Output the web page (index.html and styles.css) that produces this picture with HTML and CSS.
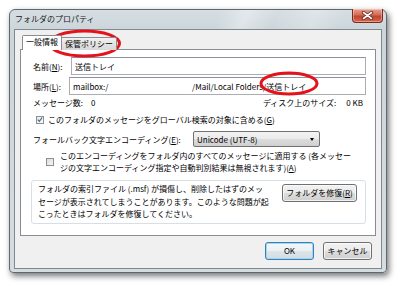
FILE: index.html
```html
<!DOCTYPE html>
<html lang="ja">
<head>
<meta charset="utf-8">
<title>フォルダのプロパティ</title>
<link rel="stylesheet" href="styles.css">
</head>
<body>
<div class="window">
  <div class="titlebar">
    <span class="title">フォルダのプロパティ</span>
    <div class="close">
      <svg width="13" height="9" viewBox="0 0 13 9"><path d="M2.5 1.5 L10.5 7.5 M10.5 1.5 L2.5 7.5" stroke="#5a2a22" stroke-width="3.2" stroke-linecap="round"/><path d="M2.5 1.5 L10.5 7.5 M10.5 1.5 L2.5 7.5" stroke="#ffffff" stroke-width="1.6" stroke-linecap="round"/></svg>
    </div>
  </div>
  <div class="client">
    <div class="tabs">
      <div class="tab active">一般情報</div>
      <div class="tab">保管ポリシー</div>
    </div>
    <div class="panel">
      <div class="row">
        <span class="lbl lbl-name">名前(<u>N</u>):</span>
        <div class="field">送信トレイ</div>
      </div>
      <div class="row row-loc">
        <span class="lbl lbl-loc">場所(<u>L</u>):</span>
        <div class="field"><span class="loc-a">mailbox:/</span><span>/Mail/Local Folders/送信トレイ</span></div>
      </div>
      <div class="row row-stats">
        <span>メッセージ数:<span class="num">0</span></span>
        <span class="size">ディスク上のサイズ:<span class="num2">0 KB</span></span>
      </div>
      <div class="row row-check">
        <span class="checkbox checked">
          <svg width="7" height="7" viewBox="0 0 7 7"><path d="M1 3.6 L2.8 5.6 L6 1.2" fill="none" stroke="#4a5f80" stroke-width="1.3"/></svg>
        </span>
        <span>このフォルダのメッセージをグローバル検索の対象に含める(<u>G</u>)</span>
      </div>
      <div class="row row-enc">
        <span class="enc-lbl">フォールバック文字エンコーディング(<u>E</u>):</span>
        <div class="select"><span>Unicode (UTF-8)</span><span class="arrow"></span></div>
      </div>
      <div class="row row-apply">
        <span class="checkbox"></span>
        <span class="apply-text">このエンコーディングをフォルダ内のすべてのメッセージに適用する (各メッセー<br>ジの文字エンコーディング指定や自動判別結果は無視されます)(<u>A</u>)</span>
      </div>
      <div class="group">
        <p class="group-text">フォルダの索引ファイル (.msf) が損傷し、削除したはずのメッ<br>セージが表示されてしまうことがあります。このような問題が起<br>こったときはフォルダを修復してください。</p>
        <button class="btn repair">フォルダを修復(<u>R</u>)</button>
      </div>
    </div>
    <div class="buttons">
      <button class="btn default">OK</button>
      <button class="btn">キャンセル</button>
    </div>
  </div>
</div>
<svg class="annot" width="400" height="287" viewBox="0 0 400 287">
  <ellipse cx="84.5" cy="43.5" rx="35" ry="12.5" fill="none" stroke="#e5121c" stroke-width="3"/>
  <ellipse cx="289" cy="83.5" rx="28" ry="10.5" fill="none" stroke="#e5121c" stroke-width="3"/>
</svg>
</body>
</html>
```
FILE: styles.css
```css
* { box-sizing: border-box; }
html, body {
  margin: 0;
  padding: 0;
  background: #ffffff;
  width: 400px;
  height: 287px;
  overflow: hidden;
}
body {
  font-family: "Noto Sans CJK JP", "Noto Sans", sans-serif;
  font-size: 8px;
  color: #000;
  position: relative;
}
u { text-decoration: underline; }

.window {
  margin: 9px 0 0 9px;
  width: 378px;
  height: 264px;
  border: 1px solid #5d6870;
  border-radius: 6px 6px 4px 4px;
  background: linear-gradient(180deg, #d6dee3 0px, #ccd5da 20px, #d6dde1 100%);
  box-shadow: 2px 3px 6px rgba(0,0,0,0.55);
  display: flex;
  flex-direction: column;
}
.titlebar {
  height: 19px;
  display: flex;
  justify-content: space-between;
  align-items: flex-start;
  padding-left: 5px;
  padding-right: 3px;
  background: linear-gradient(110deg, rgba(255,255,255,0) 0%, rgba(255,255,255,0) 55%, rgba(255,255,255,0.35) 62%, rgba(255,255,255,0) 70%, rgba(255,255,255,0.25) 80%, rgba(255,255,255,0) 88%);
  border-radius: 6px 6px 0 0;
}
.title {
  margin-top: 3px;
  color: #1a1a1a;
  line-height: 12px;
}
.close {
  margin-top: -1px;
  width: 31px;
  height: 14px;
  border: 1px solid #7b2a20;
  border-top: none;
  border-radius: 0 0 4px 4px;
  background: linear-gradient(180deg, #e8a08d 0%, #d36b55 45%, #c04430 55%, #d8664c 100%);
  display: flex;
  align-items: center;
  justify-content: center;
  box-shadow: inset 0 0 0 1px rgba(255,255,255,0.35);
}
.client {
  margin: 0 4px 3px 4px;
  flex: 1;
  border: 1px solid #7f8a90;
  background: #f0f0f0;
  padding: 6px 5px 0 5px;
  display: flex;
  flex-direction: column;
}
.tabs {
  display: flex;
  padding-left: 2px;
  height: 14px;
  align-items: flex-end;
  margin-bottom: -1px;
  position: relative;
  z-index: 1;
}
.tab {
  height: 13px;
  padding: 0 3px;
  border: 1px solid #898c95;
  border-bottom: none;
  background: linear-gradient(180deg, #f2f2f2 0%, #e3e3e3 50%, #d9d9d9 100%);
  line-height: 12px;
  border-radius: 2px 2px 0 0;
}
.tab.active {
  height: 15px;
  background: #ffffff;
  padding: 0 3px;
  margin-right: -1px;
  position: relative;
  z-index: 2;
}
.panel {
  height: 187px;
  border: 1px solid #898c95;
  background: #ffffff;
  padding: 7px 9px 0 12px;
  display: flex;
  flex-direction: column;
}
.row {
  display: flex;
  align-items: center;
}
.lbl { flex: none; }
.lbl-name { width: 38px; }
.lbl-loc { width: 36px; }
.field {
  flex: 1;
  height: 18px;
  border: 1px solid #abadb3;
  border-top-color: #8e9099;
  background: #fff;
  padding-left: 3px;
  display: flex;
  align-items: center;
  white-space: nowrap;
}
.row-loc { margin-top: 2px; }
.loc-a { width: 119px; flex: none; }
.row-stats {
  margin-top: 1px;
  height: 12px;
  justify-content: space-between;
  padding-right: 3px;
}
.num { margin-left: 8px; }
.num2 { margin-left: 10px; }
.row-check {
  margin-top: 6px;
  padding-left: 3px;
  gap: 4px;
}
.checkbox {
  width: 8px;
  height: 8px;
  border: 1px solid #8f8f8f;
  background: linear-gradient(135deg, #dcdcdc, #f6f6f6);
  display: flex;
  align-items: center;
  justify-content: center;
  flex: none;
}
.checkbox.checked { background: linear-gradient(135deg, #e4e8ee, #fafbfc); }
.row-enc {
  margin-top: 6px;
}
.enc-lbl { width: 160px; flex: none; }
.select {
  width: 127px;
  height: 16px;
  border: 1px solid #707070;
  border-radius: 2px;
  background: linear-gradient(180deg, #f2f2f2 0%, #ebebeb 50%, #dddddd 50%, #cfcfcf 100%);
  display: flex;
  align-items: center;
  justify-content: space-between;
  padding: 0 5px 0 3px;
}
.arrow {
  width: 0;
  height: 0;
  border-left: 2.5px solid transparent;
  border-right: 2.5px solid transparent;
  border-top: 3px solid #000;
}
.row-apply {
  margin-top: 3px;
  padding-left: 13px;
  gap: 6px;
  align-items: center;
}
.apply-text { line-height: 12px; }
.group {
  margin-top: 6px;
  margin-left: -2px;
  height: 44px;
  border: 1px solid #d5dfe5;
  border-radius: 3px;
  display: flex;
  justify-content: space-between;
  align-items: flex-start;
  padding: 2px 8px 0 6px;
}
.group-text {
  margin: 0;
  line-height: 12.5px;
}
.btn {
  font-family: inherit;
  font-size: 8px;
  color: #000;
  border: 1px solid #707070;
  border-radius: 3px;
  background: linear-gradient(180deg, #f2f2f2 0%, #ebebeb 50%, #dddddd 50%, #cfcfcf 100%);
  box-shadow: inset 0 0 0 1px rgba(255,255,255,0.7);
  padding: 0;
  height: 18px;
  line-height: 14px;
}
.repair {
  margin-top: 1px;
  width: 75px;
}
.buttons {
  display: flex;
  justify-content: flex-end;
  gap: 9px;
  padding: 6px 4px 0 0;
}
.buttons .btn { width: 49px; }
.btn.default {
  border-color: #3c7fb1;
  box-shadow: inset 0 0 0 1px #9fd6f3;
  background: linear-gradient(180deg, #f4f8fa 0%, #eaf0f3 50%, #dde5ea 50%, #d2dce2 100%);
}
.annot {
  position: absolute;
  left: 0;
  top: 0;
  pointer-events: none;
}
```
